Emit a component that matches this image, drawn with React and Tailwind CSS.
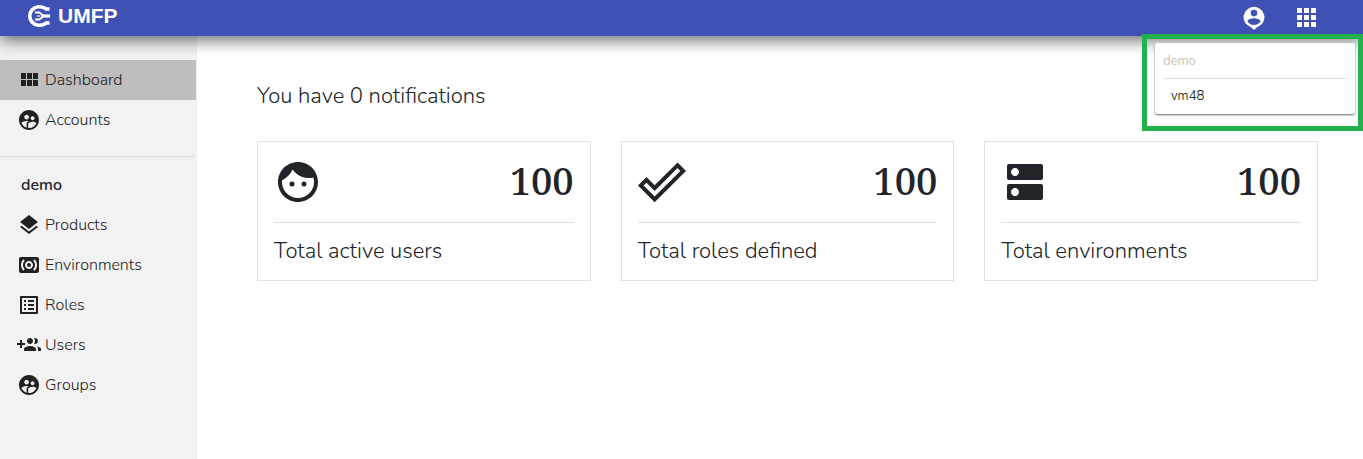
import { MdDns, MdFace, MdLayers, MdListAlt, MdSupervisedUserCircle, MdSurroundSound } from "react-icons/md";

function LogoIcon({ className }) {
  return (
    <svg viewBox="0 0 24 24" className={className} fill="none" stroke="currentColor">
      <path d="M22.500 5 H19.500 C14 1.200 8 2.500 5 6 C2 9.500 2 14.500 5 18 C8 21.500 14 22.800 19.500 19 H22.500" strokeWidth="3.600" />
      <path d="M8 8.600 H12.500 L15 10.800 V13.200 L12.500 15.400 H8" strokeWidth="2" />
      <path d="M10 12 H13" strokeWidth="1.200" />
      <path d="M15 12 H23" strokeWidth="3.200" />
    </svg>
  );
}

function ModuleIcon({ className }) {
  return (
    <svg viewBox="0 0 24 24" className={className} fill="currentColor">
      <path d="M4 11h5V5H4v6zm0 7h5v-6H4v6zm6 0h5v-6h-5v6zm6 0h5v-6h-5v6zm-6-7h5V5h-5v6zm6-6v6h5V5h-5z" />
    </svg>
  );
}

function GroupAddIcon({ className }) {
  return (
    <svg viewBox="0 0 24 24" className={className} fill="currentColor">
      <path d="M8 10H5V7H3v3H0v2h3v3h2v-3h3v-2zm10 1c1.66 0 2.99-1.34 2.99-3S19.66 5 18 5c-.32 0-.63.05-.91.14.57.81.9 1.79.9 2.86s-.34 2.04-.9 2.86c.28.09.59.14.91.14zm-5 0c1.66 0 2.99-1.34 2.99-3S14.66 5 13 5c-1.66 0-3 1.34-3 3s1.34 3 3 3zm6.62 2.16c.83.73 1.38 1.66 1.38 2.84v2h3v-2c0-1.54-2.37-2.49-4.38-2.84zM13 13c-2 0-6 1-6 3v2h12v-2c0-2-4-3-6-3z" />
    </svg>
  );
}

function CheckOutlineIcon({ className }) {
  return (
    <svg viewBox="0 0 24 24" className={className} fill="currentColor">
      <path d="M19.780 2.200L24 6.440L8.330 22.110L0 13.800L4.220 9.550L8.330 13.650L19.780 2.200M19.780 5L8.330 16.500L4.220 12.380L2.810 13.800L8.330 19.300L21.170 6.440L19.780 5Z" />
    </svg>
  );
}

function AccountPinIcon({ className }) {
  return (
    <svg viewBox="0 0 24 24" className={className} fill="currentColor" fillRule="evenodd">
      <path d="M12 .8a10.700 10.500 0 0 0-3 20.500L12 24l3-2.700A10.700 10.500 0 0 0 12 .8zM12 3.800a3.300 3.300 0 1 1 0 6.600A3.300 3.300 0 0 1 12 3.800zM5.500 15.500C5.600 13.300 9.800 12.200 12 12.200s6.400 1.100 6.500 3.300a7.900 7.900 0 0 1-13 0z" />
    </svg>
  );
}

function AppsIcon({ className }) {
  return (
    <svg viewBox="0 0 28 28" className={className} fill="currentColor">
      <path d="M5 4h5v5H5zM12 4h5v5h-5zM19 4h5v5h-5zM5 11h5v5H5zM12 11h5v5h-5zM19 11h5v5h-5zM5 18h5v5H5zM12 18h5v5h-5zM19 18h5v5h-5z" />
    </svg>
  );
}

const mainLinks = [
  { label: "Dashboard", icon: ModuleIcon, active: true },
  { label: "Accounts", icon: MdSupervisedUserCircle },
];

const projectLinks = [
  { label: "Products", icon: MdLayers },
  { label: "Environments", icon: MdSurroundSound },
  { label: "Roles", icon: MdListAlt },
  { label: "Users", icon: GroupAddIcon },
  { label: "Groups", icon: MdSupervisedUserCircle },
];

const stats = [
  { label: "Total active users", value: 100, icon: MdFace },
  { label: "Total roles defined", value: 100, icon: CheckOutlineIcon },
  { label: "Total environments", value: 100, icon: MdDns },
];

function SideLink({ label, icon: Icon, active }) {
  return (
    <a
      href="#"
      className={`mr-px flex h-10 items-center gap-1 pl-[17px] text-base font-light text-[#212121] ${active ? "bg-[#bfbdbd]" : ""}`}
    >
      <Icon className="h-6 w-6" />
      {label}
    </a>
  );
}

export default function App() {
  return (
    <div className="flex min-h-screen flex-col bg-white font-['Nunito','Open_Sans',sans-serif] text-[#212529]">
      {/* Top bar */}
      <header className="relative z-10 flex h-9 items-center justify-between bg-[#3f51b5] pr-[43px] pl-[27px] text-white shadow-[0_4px_16px_rgba(0,0,0,0.6)]">
        <a href="#" className="flex items-center gap-[7px] pb-1 font-['Liberation_Sans',sans-serif] text-[21px] leading-7 font-bold">
          <LogoIcon className="h-6 w-6" />
          UMFP
        </a>
        <div className="flex items-center gap-[26px]">
          <button type="button" aria-label="Account">
            <AccountPinIcon className="h-6 w-6" />
          </button>
          <button type="button" aria-label="Apps">
            <AppsIcon className="h-7 w-7" />
          </button>
        </div>

        {/* Project menu */}
        <div className="absolute top-[34px] right-0 w-[221px] border-[5px] border-[#22b14c] pt-1 pr-[3px] pb-3 pl-2 text-[13px]">
          <div className="rounded-xs bg-white px-2 shadow-[0_1px_2px_rgba(0,0,0,0.6)]">
            <p className="border-b border-[#e0e0e0] pt-[9px] pb-[7px] leading-[19px] text-[#c9c5b5]">demo</p>
            <a href="#" className="block px-2 py-2 leading-[19px] font-light text-black">vm48</a>
          </div>
        </div>
      </header>

      <div className="flex flex-1">
        {/* Sidebar */}
        <nav className="w-[197px] shrink-0 bg-[#f2f2f2] pt-6">
          {mainLinks.map((link) => (
            <SideLink key={link.label} {...link} />
          ))}
          <hr className="mt-4 mr-0.5 mb-2 border-[#d9d9d9]" />
          <h2 className="pl-[21px] text-base leading-10 font-semibold">demo</h2>
          {projectLinks.map((link) => (
            <SideLink key={link.label} {...link} />
          ))}
        </nav>

        {/* Content */}
        <main className="flex-1 pt-11 pr-[45px] pl-[60px]">
          <h1 className="text-[22px] leading-8 font-light">You have 0 notifications</h1>
          <div className="mt-[29px] grid grid-cols-3 gap-[30px]">
            {stats.map(({ label, value, icon: Icon }) => (
              <section key={label} className="border border-[#dee2e6] px-4 pt-4">
                <div className="flex items-start justify-between border-b border-[#dee2e6] pb-4">
                  <Icon className="h-12 w-12" />
                  <span className="font-['Noto_Serif','Liberation_Serif',serif] text-[38px] leading-11 font-medium">{value}</span>
                </div>
                <h2 className="pt-3 pb-[13px] text-[22px] leading-8 font-light">{label}</h2>
              </section>
            ))}
          </div>
        </main>
      </div>
    </div>
  );
}
